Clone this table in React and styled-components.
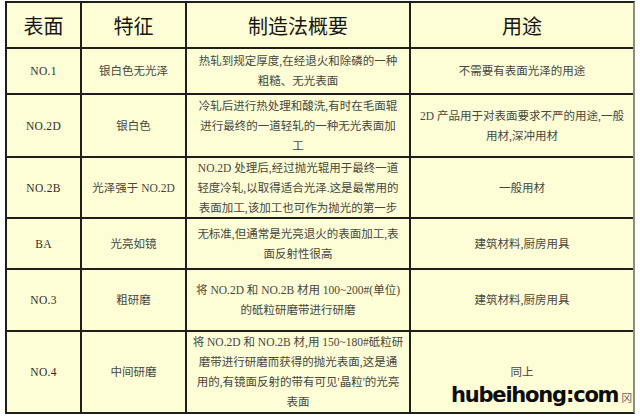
import styled, { createGlobalStyle } from "styled-components";

const GlobalStyle = createGlobalStyle`
  html, body { margin: 0; padding: 0; background: #ffffff; }
  #root { width: 640px; height: 418px; overflow: hidden; }
`;

const Page = styled.div`
  padding: 1px 0 0 5px;
  width: 640px;
  height: 418px;
  box-sizing: border-box;
  background: #ffffff;
`;

const Grid = styled.div`
  display: grid;
  grid-template-columns: 73px 103px 222px 222px;
  grid-template-rows: 44px 44px 61px 59px 49px 60px 80px;
  gap: 2px;
  width: max-content;
  background: #1e1e1a;
  border: 2px solid #1e1e1a;
  border-right-color: #8e8e88;
  font-family: "Liberation Serif", "Noto Sans CJK SC", serif;
`;

const HeadCell = styled.div`
  display: flex;
  align-items: center;
  justify-content: center;
  background: #fdfdd6;
  font-family: "Noto Sans CJK SC", sans-serif;
  font-weight: 400;
  font-size: 20px;
  color: #161614;
  padding-top: 1px;
`;

const Cell = styled.div`
  position: relative;
  display: flex;
  align-items: center;
  justify-content: center;
  background: #fdfdd6;
  font-size: 11.5px;
  line-height: 20px;
  color: #474741;
  text-align: center;
  white-space: nowrap;
  padding: 0 ${(p) => (p.$wide ? 6 : 2)}px;
`;

const Code = styled.span`
  letter-spacing: 0.3px;
  color: #2f2f2b;
`;

const Watermark = styled.div`
  position: absolute;
  left: 40px;
  bottom: 3px;
  display: flex;
  align-items: baseline;
  font-family: "DejaVu Sans", sans-serif;
  font-weight: 700;
  font-size: 21px;
  line-height: 24px;
  letter-spacing: -1.2px;
  color: #0c0c0c;
`;

const Mark = styled.span`
  margin-left: 3px;
  font-family: "Noto Sans CJK SC", sans-serif;
  font-weight: 400;
  font-size: 11px;
  letter-spacing: 0;
  color: #6a6a64;
`;

const columns = ["表面", "特征", "制造法概要", "用途"];

const rows = [
  {
    code: "NO.1",
    feat: "银白色无光泽",
    proc: ["热轧到规定厚度,在经退火和除磷的一种", "粗糙、无光表面"],
    use: ["不需要有表面光泽的用途"],
  },
  {
    code: "NO.2D",
    feat: "银白色",
    proc: ["冷轧后进行热处理和酸洗,有时在毛面辊", "进行最终的一道轻轧的一种无光表面加", "工"],
    use: ["2D 产品用于对表面要求不严的用途,一般", "用材,深冲用材"],
  },
  {
    code: "NO.2B",
    feat: "光泽强于 NO.2D",
    proc: [
      "NO.2D 处理后,经过抛光辊用于最终一道",
      "轻度冷轧,以取得适合光泽.这是最常用的",
      "表面加工,该加工也可作为抛光的第一步",
    ],
    use: ["一般用材"],
  },
  {
    code: "BA",
    feat: "光亮如镜",
    proc: ["无标准,但通常是光亮退火的表面加工,表", "面反射性很高"],
    use: ["建筑材料,厨房用具"],
  },
  {
    code: "NO.3",
    feat: "粗研磨",
    proc: ["将 NO.2D 和 NO.2B 材用 100~200#(单位)", "的砥粒研磨带进行研磨"],
    use: ["建筑材料,厨房用具"],
  },
  {
    code: "NO.4",
    feat: "中间研磨",
    proc: [
      "将 NO.2D 和 NO.2B 材,用 150~180#砥粒研",
      "磨带进行研磨而获得的抛光表面,这是通",
      "用的,有镜面反射的带有可见'晶粒'的光亮",
      "表面",
    ],
    use: ["同上"],
    watermark: true,
  },
];

function Lines({ lines }) {
  return (
    <div>
      {lines.map((line, i) => (
        <div key={i}>{line}</div>
      ))}
    </div>
  );
}

export default function App() {
  return (
    <Page>
      <GlobalStyle />
      <Grid>
        {columns.map((title) => (
          <HeadCell key={title}>{title}</HeadCell>
        ))}
        {rows.map((row) => [
          <Cell key={row.code + "c"}>
            <Code>{row.code}</Code>
          </Cell>,
          <Cell key={row.code + "f"}>{row.feat}</Cell>,
          <Cell key={row.code + "p"} $wide>
            <Lines lines={row.proc} />
          </Cell>,
          <Cell key={row.code + "u"} $wide>
            <Lines lines={row.use} />
            {row.watermark && (
              <Watermark>
                hubeihong:com<Mark>冈</Mark>
              </Watermark>
            )}
          </Cell>,
        ])}
      </Grid>
    </Page>
  );
}
